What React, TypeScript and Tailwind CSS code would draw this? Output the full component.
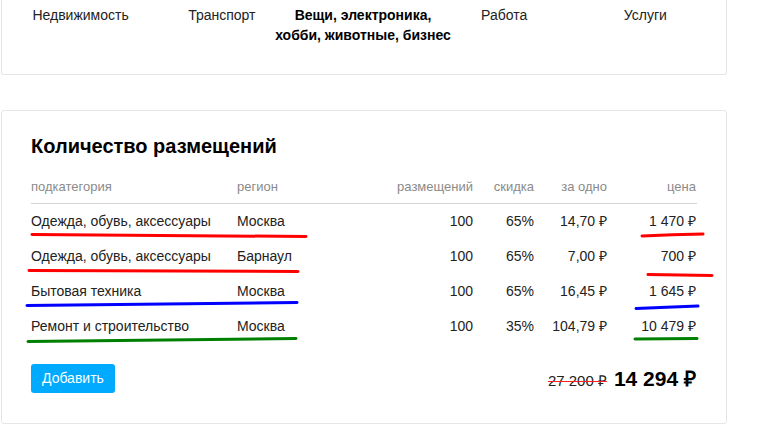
import React from 'react';

const categories = [
  { label: 'Недвижимость' },
  { label: 'Транспорт' },
  { label: 'Вещи, электроника,', second: 'хобби, животные, бизнес', active: true },
  { label: 'Работа' },
  { label: 'Услуги' },
];

const rows = [
  { sub: 'Одежда, обувь, аксессуары', region: 'Москва', count: 100, discount: '65%', one: '14,70 ₽', price: '1 470 ₽' },
  { sub: 'Одежда, обувь, аксессуары', region: 'Барнаул', count: 100, discount: '65%', one: '7,00 ₽', price: '700 ₽' },
  { sub: 'Бытовая техника', region: 'Москва', count: 100, discount: '65%', one: '16,45 ₽', price: '1 645 ₽' },
  { sub: 'Ремонт и строительство', region: 'Москва', count: 100, discount: '35%', one: '104,79 ₽', price: '10 479 ₽' },
];

const cols = 'grid grid-cols-[206px_156px_80px_61px_73px_89px]';

// hand-drawn marker strokes over the screenshot
function Marks() {
  return (
    <svg className="pointer-events-none absolute left-0 top-0" width="760" height="440" fill="none" strokeLinecap="round" strokeWidth="3">
      <path d="M32 234.5 Q170 236 306 236.5" stroke="#ff0000" />
      <path d="M642 236 Q672 234.5 703 234" stroke="#ff0000" />
      <path d="M29 270.5 Q160 271.5 298 271.5" stroke="#ff0000" />
      <path d="M648 274.5 L712 275.5" stroke="#ff0000" />
      <path d="M27 305.5 Q160 304 297 302.5" stroke="#0000ff" />
      <path d="M636 308.5 Q666 307 698 306" stroke="#0000ff" />
      <path d="M28 341.5 Q160 340 296 338.5" stroke="#008000" />
      <path d="M635 339 L697 338.5" stroke="#008000" />
    </svg>
  );
}

export default function App() {
  return (
    <div className="relative h-[440px] w-[760px] overflow-hidden bg-white font-['Liberation_Sans',Arial,sans-serif] text-[14px] text-[#222]">
      {/* category tabs */}
      <div className="ml-px w-[726px] rounded-b-[3px] border-x border-b border-[#e6e6e6] pb-[29px] pl-[8px] pr-[10px] pt-[5px]">
        <div className="grid grid-cols-5 leading-5">
          {categories.map((c) => (
            <div key={c.label} className="flex justify-center">
              <span className={`whitespace-nowrap text-center ${c.active ? 'font-bold text-black' : ''}`}>
                {c.label}
                {c.second && (
                  <>
                    <br />
                    {c.second}
                  </>
                )}
              </span>
            </div>
          ))}
        </div>
      </div>

      {/* placements */}
      <div className="ml-px mt-[35px] h-[314px] w-[726px] rounded-[3px] border border-[#e6e6e6] px-[29px] pt-[23px]">
        <h2 className="text-[20px] font-bold leading-6 text-black">Количество размещений</h2>

        <div className={`${cols} mt-[12px] h-[34px] items-center border-b border-[#d4d4d4] text-[13px] text-[#8a8a8a]`}>
          <div>подкатегория</div>
          <div>регион</div>
          <div className="text-right">размещений</div>
          <div className="text-right">скидка</div>
          <div className="text-right">за одно</div>
          <div className="text-right">цена</div>
        </div>

        {rows.map((r, i) => (
          <div key={i} className={`${cols} h-[35px] items-center`}>
            <div>{r.sub}</div>
            <div>{r.region}</div>
            <div className="text-right">{r.count}</div>
            <div className="text-right">{r.discount}</div>
            <div className="text-right">{r.one}</div>
            <div className="text-right">{r.price}</div>
          </div>
        ))}

        <div className="mt-[19px] flex items-center justify-between">
          <button className="h-[29px] rounded-[3px] bg-[#00aaff] px-[11px] text-[14px] text-white">Добавить</button>
          <div className="flex items-baseline gap-[7px] pr-px">
            <span className="text-[15px] text-[#222] line-through decoration-[#ff2020]">27 200 ₽</span>
            <span className="text-[21px] font-bold text-black">14 294 ₽</span>
          </div>
        </div>
      </div>

      <Marks />
    </div>
  );
}
